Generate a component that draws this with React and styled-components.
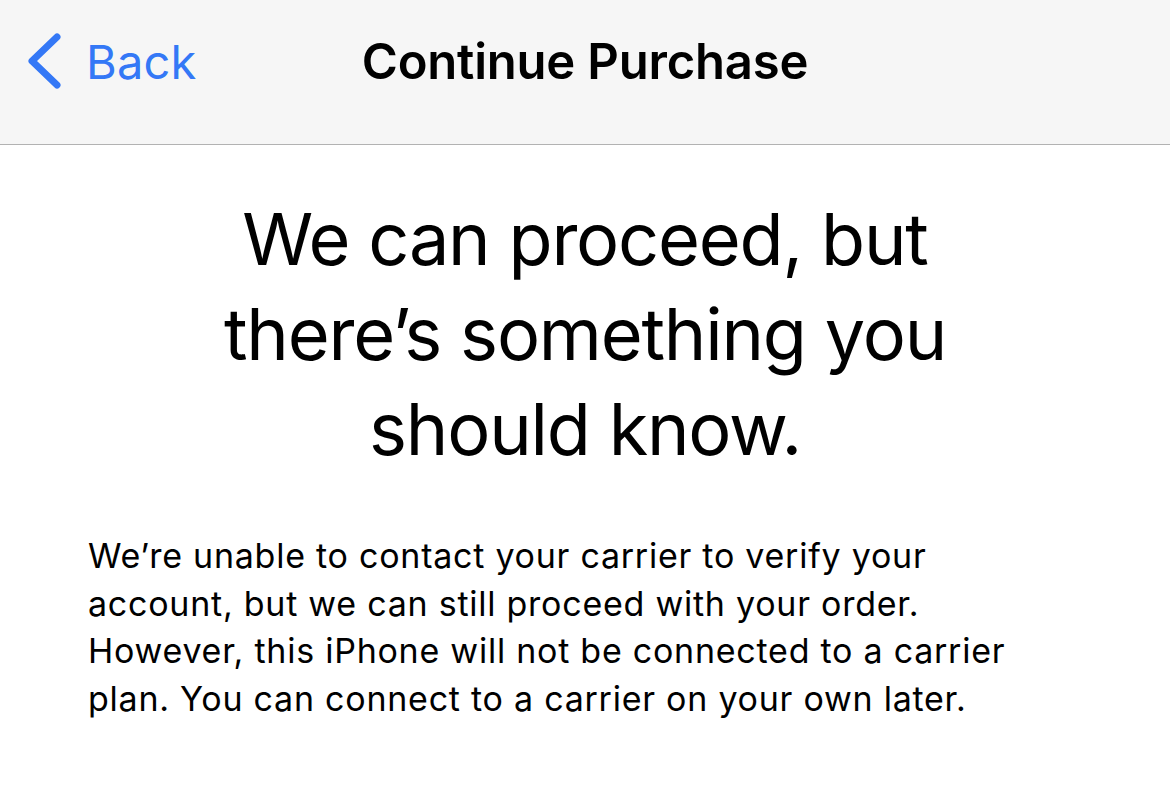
import React from "react";
import styled, { createGlobalStyle } from "styled-components";

const Global = createGlobalStyle`
  html, body { margin: 0; padding: 0; background: #ffffff; }
  body { font-family: Inter, "Noto Sans", sans-serif; -webkit-font-smoothing: antialiased; }
`;

const Page = styled.div`
  width: 1170px;
  height: 808px;
  background: #ffffff;
  overflow: hidden;
`;

const NavBar = styled.header`
  height: 145px;
  box-sizing: border-box;
  background: #f6f6f6;
  border-bottom: 1px solid #b2b2b2;
  display: grid;
  grid-template-columns: 1fr auto 1fr;
  align-items: center;
  padding: 0 0 22px 0;
`;

const BackButton = styled.button`
  justify-self: start;
  display: flex;
  align-items: center;
  gap: 24px;
  background: none;
  border: 0;
  padding: 0 0 0 26px;
  color: #3478f6;
  font-family: Inter, sans-serif;
  font-size: 47px;
  font-weight: 400;
  letter-spacing: 0.2px;
  cursor: pointer;
`;

const Title = styled.h1`
  margin: 0;
  font-size: 49px;
  font-weight: 600;
  color: #000;
  letter-spacing: -0.2px;
`;

const Content = styled.main`
  display: flex;
  flex-direction: column;
  align-items: center;
  padding-top: 46px;
`;

const Heading = styled.h2`
  margin: 0;
  width: 780px;
  text-align: center;
  font-size: 72px;
  font-weight: 400;
  line-height: 95px;
  color: #000;
  letter-spacing: -1.2px;
`;

const Body = styled.p`
  align-self: stretch;
  margin: 56px 0 0 0;
  padding: 0 122px 0 88px;
  font-size: 34px;
  line-height: 47.5px;
  color: #000;
  letter-spacing: 0.75px;
`;

const Chevron = () => (
  <svg width="36" height="58" viewBox="0 0 36 58" fill="none">
    <path d="M31 5 L6 29 L31 53" stroke="#3478f6" strokeWidth="7" strokeLinecap="round" strokeLinejoin="round" />
  </svg>
);

export default function App() {
  return (
    <Page>
      <Global />
      <NavBar>
        <BackButton>
          <Chevron />
          <span>Back</span>
        </BackButton>
        <Title>Continue Purchase</Title>
        <div />
      </NavBar>
      <Content>
        <Heading>We can proceed, but there’s something you should know.</Heading>
        <Body>
          We’re unable to contact your carrier to verify your account, but we can still proceed with your order.
          However, this iPhone will not be connected to a carrier plan. You can connect to a carrier on your own later.
        </Body>
      </Content>
    </Page>
  );
}
